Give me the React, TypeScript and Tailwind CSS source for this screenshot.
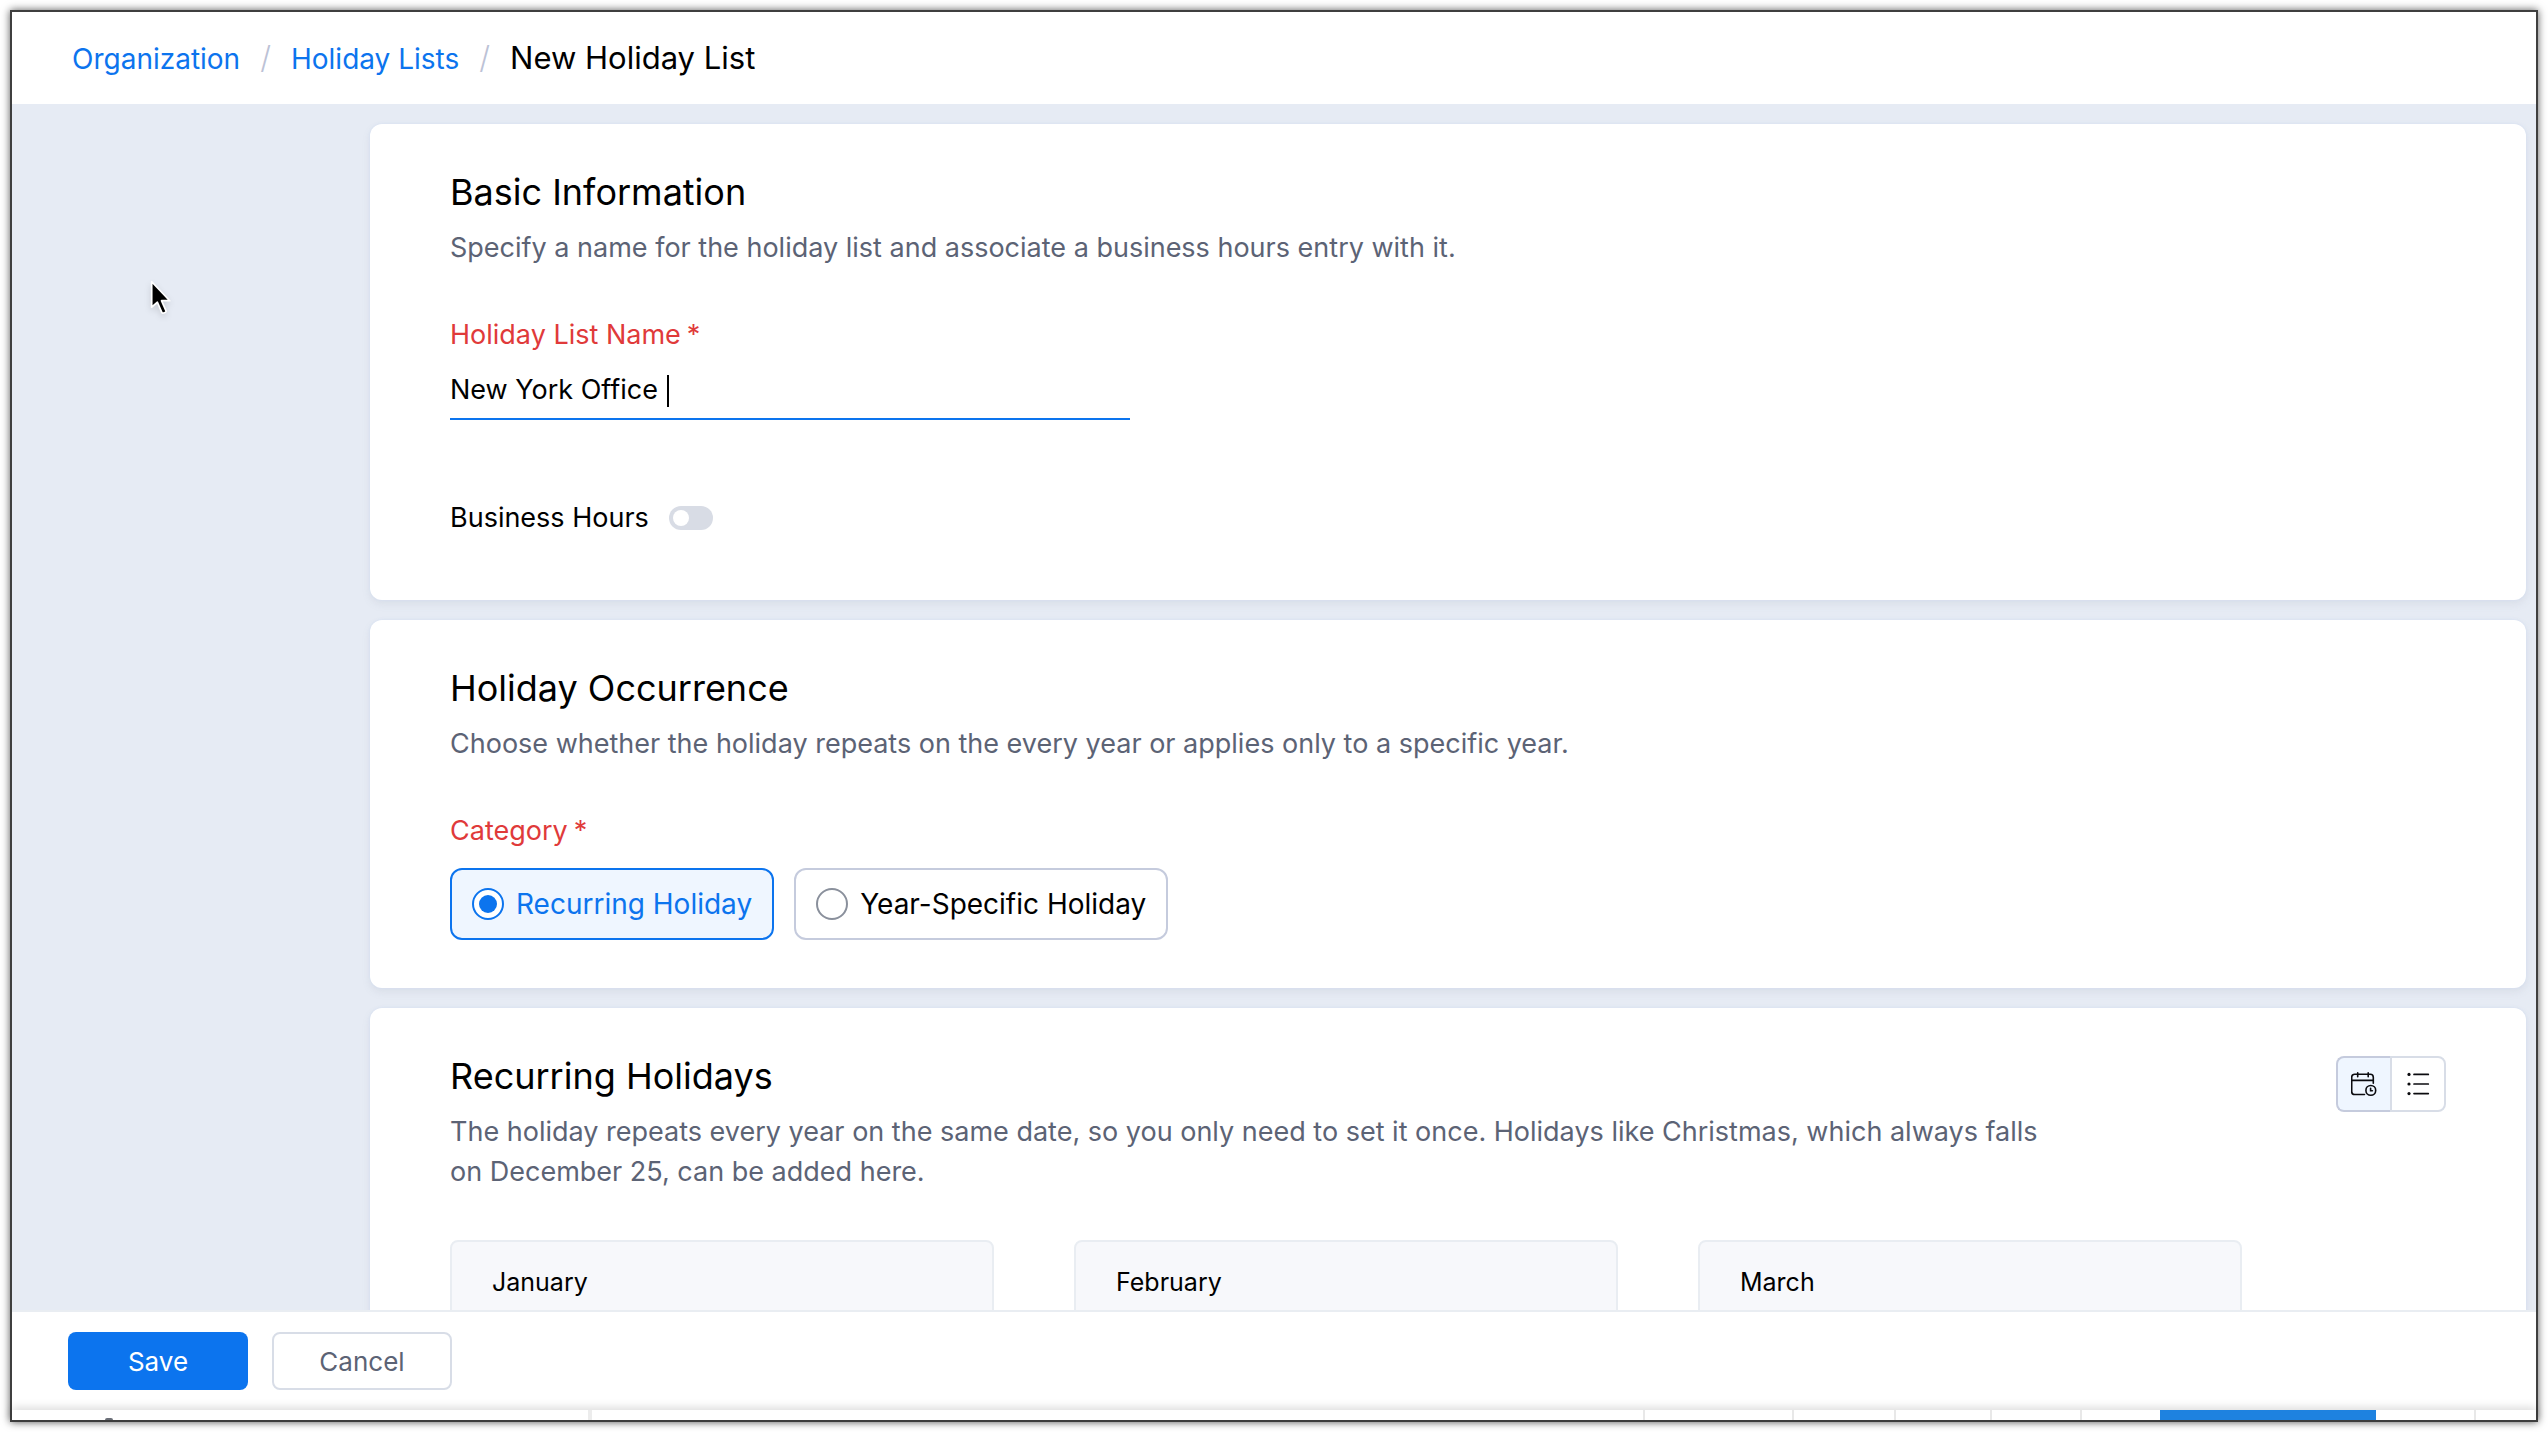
import { useState, type ReactNode } from "react";

const MONTHS = ["January", "February", "March"];

function CalendarClockIcon() {
  return (
    <svg width="26" height="25" viewBox="0 0 26 25" fill="none" stroke="#0b0b0f" strokeWidth="1.6" strokeLinecap="round">
      <path d="M22.3 11.2V5.3a3 3 0 0 0-3-3H3.7a3 3 0 0 0-3 3v14.2a3 3 0 0 0 3 3h9.8" />
      <path d="M.7 8.4h21.6M6.7.8v4M17.2.8v4" />
      <circle cx="19.8" cy="18.4" r="4.9" />
      <path d="M19.6 16.2v2.5h1.8" />
    </svg>
  );
}

function ListIcon() {
  return (
    <svg width="24" height="24" viewBox="0 0 24 24" fill="#0b0b0f">
      {[2.4, 12, 21.6].map((y) => (
        <g key={y}>
          <circle cx="3" cy={y} r="1.6" />
          <path d={`M8 ${y}h14.3`} stroke="#0b0b0f" strokeWidth="1.7" strokeLinecap="round" />
        </g>
      ))}
    </svg>
  );
}

function Pointer() {
  return (
    <svg
      width="28"
      height="42"
      viewBox="0 0 26 38"
      className="pointer-events-none absolute left-[137px] top-[266px] drop-shadow-md"
      aria-hidden="true"
    >
      <path
        d="M2.5 3v23.6l5.3-4.6 4.2 9.6c.6 1.3 4.4-.2 3.8-1.6l-4.2-9.4h7.6z"
        fill="#000"
        stroke="#fff"
        strokeWidth="1.6"
        strokeLinejoin="round"
      />
    </svg>
  );
}

function Card({ title, text, aside, children }: { title: string; text: string; aside?: ReactNode; children: ReactNode }) {
  return (
    <section className="shrink-0 rounded-xl bg-white px-20 pt-[46px] shadow-[0_0_3px_#d3def2,0_4px_8px_rgba(120,130,150,0.12)]">
      <div className="flex items-start justify-between gap-10">
        <div className="max-w-[1600px]">
          <h2 className="text-[36px] leading-[44px] text-black">{title}</h2>
          <p className="mt-3.5 text-[27px] leading-10 text-[#5c6375]">{text}</p>
        </div>
        {aside}
      </div>
      {children}
    </section>
  );
}

function CategoryOption({ label, checked, onSelect }: { label: string; checked: boolean; onSelect: () => void }) {
  return (
    <label
      className={`flex h-[72px] cursor-pointer items-center gap-3 rounded-xl border-2 px-5 text-[28px] leading-10 ${
        checked ? "border-[#0c74ee] bg-[#eff6ff] text-[#0c74ee]" : "border-[#c5cbdd] bg-white text-black"
      }`}
    >
      <input
        type="radio"
        name="category"
        checked={checked}
        onChange={onSelect}
        className="grid size-8 appearance-none place-items-center rounded-full border-2 border-[#8a909c] bg-white before:size-[18px] before:rounded-full checked:border-[#0c74ee] checked:before:bg-[#0c74ee]"
      />
      {label}
    </label>
  );
}

export default function App() {
  const [name, setName] = useState("New York Office");
  const [category, setCategory] = useState("recurring");
  const [businessHours, setBusinessHours] = useState(false);

  return (
    <div className="h-screen bg-white p-2.5 font-[Inter,sans-serif] text-black">
      <div className="relative flex h-full flex-col border-2 border-[#3f3f3f] bg-white shadow-[0_0_8px_rgba(0,0,0,0.65)]">
        <nav className="flex h-[92px] shrink-0 items-baseline gap-5 px-[60px] pt-6 text-[28px] leading-[44px]">
          <a href="#organization" className="text-[#0c74ee]">Organization</a>
          <span className="text-[31px] font-light text-[#bcc2d6]">/</span>
          <a href="#holiday-lists" className="text-[#0c74ee]">Holiday Lists</a>
          <span className="text-[31px] font-light text-[#bcc2d6]">/</span>
          <h1 className="text-[31px]">New Holiday List</h1>
        </nav>

        <main className="flex min-h-0 flex-1 flex-col gap-5 overflow-hidden bg-[#e6ebf4] pl-[358px] pr-2.5 pt-5">
          <Card
            title="Basic Information"
            text="Specify a name for the holiday list and associate a business hours entry with it."
          >
            <label htmlFor="list-name" className="mt-[47px] flex gap-1.5 text-[27px] leading-10 text-[#e03a3a]">
              Holiday List Name <span>*</span>
            </label>
            <div className="relative w-[680px] border-b-2 border-[#0c74ee]">
              <input
                id="list-name"
                type="text"
                value={name}
                onChange={(e) => setName(e.target.value)}
                className="block h-[63px] w-full pt-1.5 text-[27px] outline-none"
              />
              <span className="absolute left-[217px] top-5 h-8 w-0.5 bg-black" />
            </div>
            <div className="mt-[78px] flex items-center gap-5 pb-[62px]">
              <label htmlFor="business-hours" className="text-[27px] leading-10">Business Hours</label>
              <input
                id="business-hours"
                type="checkbox"
                role="switch"
                checked={businessHours}
                onChange={(e) => setBusinessHours(e.target.checked)}
                className="flex h-6 w-11 appearance-none items-center rounded-full bg-[#d8dce5] px-1 before:size-4 before:rounded-full before:bg-white checked:justify-end checked:bg-[#0c74ee]"
              />
            </div>
          </Card>

          <Card
            title="Holiday Occurrence"
            text="Choose whether the holiday repeats on the every year or applies only to a specific year."
          >
            <div role="radiogroup" aria-labelledby="category-label" className="pb-12 pt-[47px]">
              <p id="category-label" className="flex gap-1.5 text-[27px] leading-10 text-[#e03a3a]">
                Category <span>*</span>
              </p>
              <div className="mt-[17px] flex gap-5">
                <CategoryOption
                  label="Recurring Holiday"
                  checked={category === "recurring"}
                  onSelect={() => setCategory("recurring")}
                />
                <CategoryOption
                  label="Year-Specific Holiday"
                  checked={category === "specific"}
                  onSelect={() => setCategory("specific")}
                />
              </div>
            </div>
          </Card>

          <Card
            title="Recurring Holidays"
            text="The holiday repeats every year on the same date, so you only need to set it once. Holidays like Christmas, which always falls on December 25, can be added here."
            aside={
              <div className="mt-0.5 flex h-14 shrink-0">
                <button
                  type="button"
                  aria-label="Calendar view"
                  className="grid w-[54px] place-items-center rounded-l-lg border-2 border-r-0 border-[#c5cbdd] bg-[#eff6ff]"
                >
                  <CalendarClockIcon />
                </button>
                <button
                  type="button"
                  aria-label="List view"
                  className="grid w-14 place-items-center rounded-r-lg border-2 border-[#d8dde7] bg-white"
                >
                  <ListIcon />
                </button>
              </div>
            }
          >
            <div className="mt-12 grid max-w-[1792px] grid-cols-3 gap-20">
              {MONTHS.map((month) => (
                <div key={month} className="h-[480px] rounded-lg border-2 border-[#e9edf2] bg-[#f7f8fb] px-10 pt-5">
                  <h3 className="text-[25px] leading-10">{month}</h3>
                </div>
              ))}
            </div>
          </Card>
        </main>

        <footer className="flex shrink-0 gap-6 border-t-2 border-[#e9edf2] bg-white px-14 py-5 text-[26px]">
          <button type="button" className="h-[58px] w-[180px] rounded-lg bg-[#0c74ee] text-white">Save</button>
          <button type="button" className="h-[58px] w-[180px] rounded-lg border-2 border-[#d8dde7] bg-white text-[#5c6375]">
            Cancel
          </button>
        </footer>

        <div className="flex h-2.5 shrink-0 bg-white shadow-[0_-2px_10px_rgba(0,0,0,0.16)]" aria-hidden="true">
          <div className="flex w-[580px] items-end border-r-4 border-[#ececec] pl-[93px]">
            <span className="h-0.5 w-2 rounded-t-full bg-[#6b6f78]" />
          </div>
          <div className="flex-1" />
          <div className="w-[149px] border-l-2 border-[#e8e8e8]" />
          <div className="w-[102px] border-l-2 border-[#e8e8e8]" />
          <div className="w-24 border-l-2 border-[#e8e8e8]" />
          <div className="w-[90px] border-l-2 border-[#e8e8e8]" />
          <div className="w-20 border-l-2 border-[#e8e8e8]" />
          <div className="w-[216px] bg-[#1e82e0]" />
          <div className="w-[98px]" />
          <div className="w-[62px] border-l-2 border-[#e8e8e8]" />
        </div>

        <Pointer />
      </div>
    </div>
  );
}
